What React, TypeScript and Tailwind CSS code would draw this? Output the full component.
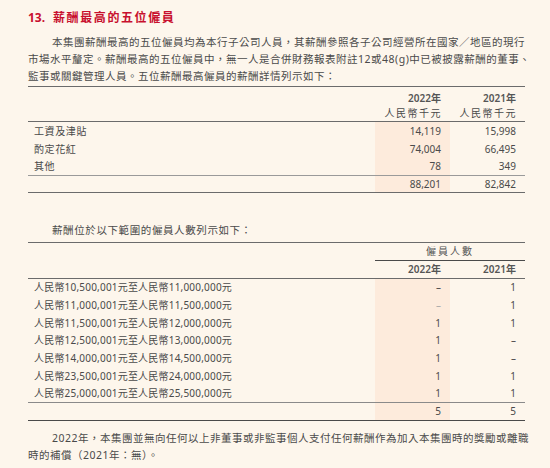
import { FC } from 'react';

const font = "font-['Noto_Sans','Noto_Sans_CJK_TC',sans-serif]";

interface PayRow {
  label: string;
  y2022: string;
  y2021: string;
}

const payRows: PayRow[] = [
  { label: '工資及津貼', y2022: '14,119', y2021: '15,998' },
  { label: '酌定花紅', y2022: '74,004', y2021: '66,495' },
  { label: '其他', y2022: '78', y2021: '349' },
];

interface BandRow {
  from: string;
  to: string;
  y2022: string;
  y2021: string;
  faint?: boolean;
}

const bandRows: BandRow[] = [
  { from: '10,500,001', to: '11,000,000', y2022: '–', y2021: '1' },
  { from: '11,000,001', to: '11,500,000', y2022: '–', y2021: '1', faint: true },
  { from: '11,500,001', to: '12,000,000', y2022: '1', y2021: '1' },
  { from: '12,500,001', to: '13,000,000', y2022: '1', y2021: '–' },
  { from: '14,000,001', to: '14,500,000', y2022: '1', y2021: '–' },
  { from: '23,500,001', to: '24,000,000', y2022: '1', y2021: '1' },
  { from: '25,000,001', to: '25,500,000', y2022: '1', y2021: '1' },
];

// one justified line of running text
const Line: FC<{ text: string; indent?: boolean; last?: boolean }> = ({ text, indent, last }) => (
  <div
    className={`h-[17px] leading-[17px] whitespace-nowrap ${indent ? 'pl-[24px]' : ''} ${
      last ? 'text-left' : 'text-justify [text-align-last:justify]'
    }`}
  >
    {text}
  </div>
);

const Row: FC<{
  h: string;
  label?: string;
  a: string;
  b: string;
  shade?: boolean;
  border?: string;
  aClass?: string;
  labelClass?: string;
}> = ({ h, label, a, b, shade, border, aClass, labelClass }) => (
  <div className={`grid grid-cols-[1fr_75px_75px] ${h} ${border ?? ''}`}>
    <div className={`flex items-center pl-[6px] ${labelClass ?? 'tracking-[0.6px]'}`}>{label}</div>
    <div className={`flex items-center justify-end pr-[9px] ${shade ? 'bg-[#fdebdc]' : ''} ${aClass ?? ''}`}>{a}</div>
    <div className="flex items-center justify-end pr-[9px]">{b}</div>
  </div>
);

const App: FC = () => {
  return (
    <div className={`w-[550px] h-[468px] overflow-hidden bg-[#fdf6ec] text-[#4a4a4a] ${font}`}>
      <div className="w-[497px] ml-[28px] pt-[10px]">
        <h2 className="flex h-[16px] items-center text-[12px] font-bold text-[#c8102e]">
          <span className="w-[25px]">13.</span>
          <span className="tracking-[1.6px]">薪酬最高的五位僱員</span>
        </h2>

        <div className="mt-[8px] text-[10.5px] tracking-[0.5px]">
          <Line indent text="本集團薪酬最高的五位僱員均為本行子公司人員，其薪酬參照各子公司經營所在國家／地區的現行" />
          <Line text="市場水平釐定。薪酬最高的五位僱員中，無一人是合併財務報表附註12或48(g)中已被披露薪酬的董事、" />
          <Line last text="監事或關鍵管理人員。五位薪酬最高僱員的薪酬詳情列示如下：" />
        </div>

        {/* remuneration table */}
        <div className="mt-[1px] text-[10px] border-t border-[#6b6b6b]">
          <div className="grid grid-cols-[1fr_75px_75px] h-[19px] font-semibold text-[#555]">
            <div />
            <div className="flex items-end justify-end pr-[9px]">2022年</div>
            <div className="flex items-end justify-end pr-[9px]">2021年</div>
          </div>
          <div className="grid grid-cols-[1fr_75px_75px] h-[16px] border-b border-[#6b6b6b] tracking-[1.5px]">
            <div />
            <div className="flex items-center justify-end pr-[8px]">人民幣千元</div>
            <div className="flex items-center justify-end pr-[8px]">人民幣千元</div>
          </div>
          {payRows.map((r, i) => (
            <Row
              key={r.label}
              h="h-[18px]"
              label={r.label}
              a={r.y2022}
              b={r.y2021}
              shade
              border={i === payRows.length - 1 ? 'border-b border-[#9a9a9a]' : ''}
            />
          ))}
          <Row h="h-[17px]" a="88,201" b="82,842" shade border="border-b border-[#6b6b6b]" />
        </div>

        <div className="mt-[29px] pl-[24px] h-[17px] leading-[17px] text-[10.5px] tracking-[0.6px]">
          薪酬位於以下範圍的僱員人數列示如下：
        </div>

        {/* band table */}
        <div className="mt-[3px] text-[10px] border-t border-[#6b6b6b]">
          <div className="grid grid-cols-[1fr_150px] h-[18px]">
            <div />
            <div className="flex items-center justify-center border-b border-[#4a4a4a] tracking-[2px] text-[#555]">
              僱員人數
            </div>
          </div>
          <div className="grid grid-cols-[1fr_75px_75px] h-[18px] border-b border-[#6b6b6b] font-semibold text-[#555]">
            <div />
            <div className="flex items-center justify-end pr-[9px]">2022年</div>
            <div className="flex items-center justify-end pr-[9px]">2021年</div>
          </div>
          {bandRows.map((r, i) => (
            <Row
              key={r.from}
              h="h-[17.7px]"
              label={`人民幣${r.from}元至人民幣${r.to}元`}
              labelClass="tracking-[0.2px]"
              a={r.y2022}
              b={r.y2021}
              shade
              aClass={r.faint ? 'text-[#aaa]' : ''}
              border={i === bandRows.length - 1 ? 'border-b border-[#8a8a8a]' : ''}
            />
          ))}
          <Row h="h-[18px]" a="5" b="5" shade border="border-b border-[#4a4a4a]" />
        </div>

        <div className="mt-[9px] text-[10.5px] tracking-[0.5px]">
          <Line indent text="2022年，本集團並無向任何以上非董事或非監事個人支付任何薪酬作為加入本集團時的獎勵或離職" />
          <Line last text="時的補償（2021年：無）。" />
        </div>
      </div>
    </div>
  );
};

export default App;
